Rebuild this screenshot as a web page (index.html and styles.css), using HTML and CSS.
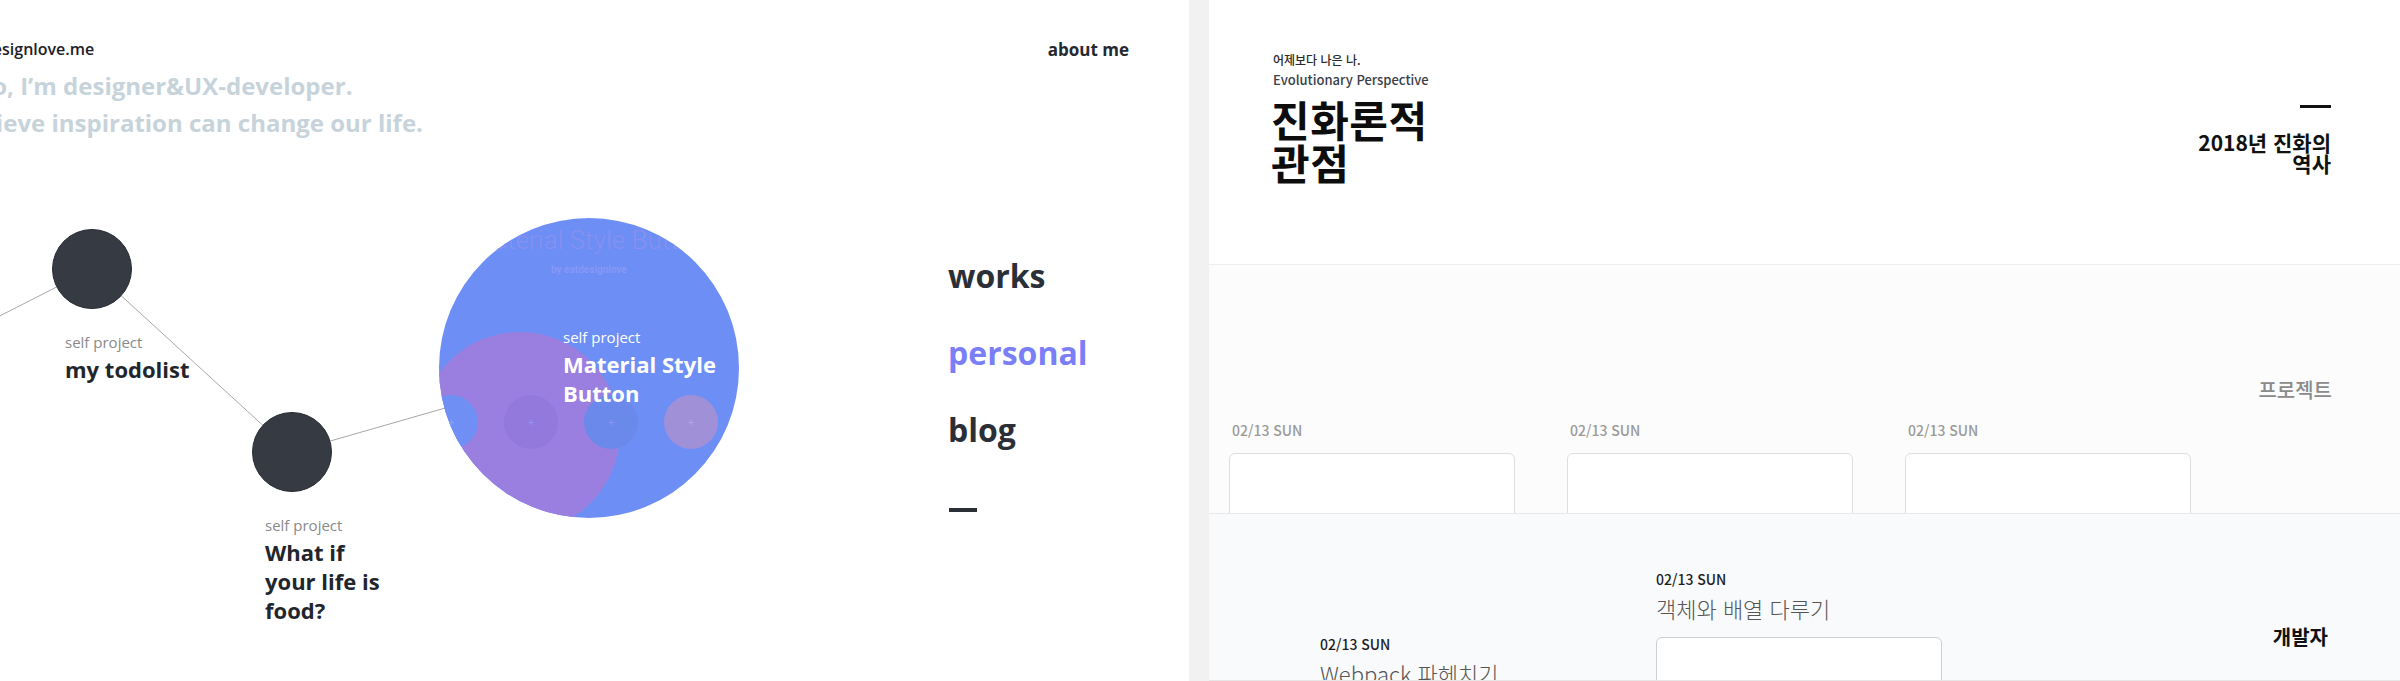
FILE: index.html
```html
<!DOCTYPE html>
<html lang="ko">
<head>
<meta charset="utf-8">
<title>eatdesignlove / 진화론적 관점</title>
<link rel="stylesheet" href="styles.css">
</head>
<body>
<section class="left">
  <header class="lhead">
    <div class="topbar">
      <div class="brand">eatdesignlove.me</div>
      <a class="about">about me</a>
    </div>
    <div class="hero">
      <p>Hello, I’m designer&amp;UX-developer.</p>
      <p>I believe inspiration can change our life.</p>
    </div>
  </header>
  <div class="stage">
    <div class="diagram">
      <svg class="links" width="948" height="541" viewBox="0 0 948 541">
        <line x1="-20" y1="186" x2="92" y2="129"/>
        <line x1="92" y1="129" x2="292" y2="312"/>
        <line x1="292" y1="312" x2="588" y2="227"/>
      </svg>
      <div class="node n1"></div>
      <div class="label l1">
        <div class="kind">self project</div>
        <div class="name">my todolist</div>
      </div>
      <div class="node n2"></div>
      <div class="label l2">
        <div class="kind">self project</div>
        <div class="name">What if your life is food?</div>
      </div>
      <div class="msb">
        <div class="msb-title">Material Style Button</div>
        <div class="msb-by">by eatdesignlove</div>
        <div class="msb-blob"></div>
        <div class="msb-dots">
          <span class="d d1">+</span><span class="d d2">+</span><span class="d d3">+</span><span class="d d4">+</span>
        </div>
        <div class="label lw">
          <div class="kind">self project</div>
          <div class="name">Material Style Button</div>
        </div>
      </div>
    </div>
    <nav class="nav">
      <a class="nav-item">works</a>
      <a class="nav-item active">personal</a>
      <a class="nav-item">blog</a>
      <span class="nav-dash"></span>
    </nav>
  </div>
</section>
<div class="strip"></div>
<section class="right">
  <header class="rhead">
    <div class="rhead-left">
      <p class="tag">어제보다 나은 나.</p>
      <p class="sub">Evolutionary Perspective</p>
      <h1 class="big">진화론적<br>관점</h1>
    </div>
    <div class="rhead-right">
      <span class="rdash"></span>
      <p class="history">2018년 진화의 역사</p>
    </div>
  </header>
  <div class="projects">
    <h2 class="sec-title">프로젝트</h2>
    <div class="cards">
      <div class="card-col"><div class="date">02/13 SUN</div><div class="card"></div></div>
      <div class="card-col"><div class="date">02/13 SUN</div><div class="card"></div></div>
      <div class="card-col"><div class="date">02/13 SUN</div><div class="card"></div></div>
    </div>
  </div>
  <div class="dev">
    <div class="post p1">
      <div class="date dark">02/13 SUN</div>
      <div class="post-title">Webpack 파헤치기</div>
    </div>
    <div class="post p2">
      <div class="date dark">02/13 SUN</div>
      <div class="post-title">객체와 배열 다루기</div>
      <div class="card card2"></div>
    </div>
    <h2 class="dev-title">개발자</h2>
  </div>
</section>
</body>
</html>
```
FILE: styles.css
```css
* { box-sizing: border-box; }
html, body { margin: 0; padding: 0; }
body {
  width: 2400px;
  height: 681px;
  overflow: hidden;
  display: flex;
  background: #fff;
  font-family: "Open Sans", "Noto Sans", sans-serif;
}
p, h1, h2 { margin: 0; }
a { text-decoration: none; }

/* ---------- left panel ---------- */
.left {
  width: 1189px;
  height: 681px;
  flex: none;
  overflow: hidden;
  display: flex;
  flex-direction: column;
  background: #fff;
}
.lhead { height: 140px; flex: none; }
.topbar {
  display: flex;
  justify-content: space-between;
  align-items: center;
  height: 24px;
  margin-top: 37px;
  padding-right: 60px;
}
.brand {
  margin-left: -42px;
  font-size: 16px;
  font-weight: 600;
  color: #1d2026;
  white-space: nowrap;
}
.about {
  font-size: 17px;
  font-weight: 700;
  color: #252930;
}
.hero {
  margin-left: -55px;
  margin-top: 6px;
  font-size: 24px;
  font-weight: 700;
  line-height: 37px;
  color: #c7d3db;
  white-space: nowrap;
}

.stage { flex: 1; display: flex; }
.diagram { position: relative; width: 948px; flex: none; }
.links { position: absolute; left: 0; top: 0; overflow: visible; }
.links line { stroke: #a7a7a7; stroke-width: 1; }

.node {
  position: absolute;
  width: 80px;
  height: 80px;
  border-radius: 50%;
  background: #363b43;
  border: 1px solid #262a30;
}
.n1 { left: 52px; top: 89px; }
.n2 { left: 252px; top: 272px; }

.label { position: absolute; }
.l1 { left: 65px; top: 191px; }
.l2 { left: 265px; top: 374px; width: 122px; }
.kind {
  font-size: 15px;
  line-height: 22px;
  color: #8a8a8a;
}
.name {
  margin-top: 2px;
  font-size: 22px;
  line-height: 29px;
  font-weight: 700;
  color: #22262c;
}

.msb {
  position: absolute;
  left: 439px;
  top: 78px;
  width: 300px;
  height: 300px;
  border-radius: 50%;
  overflow: hidden;
  background: #6d8ef5;
  text-align: center;
}
.msb-title {
  margin-top: 5px;
  font-family: Roboto, sans-serif;
  font-weight: 300;
  font-size: 26px;
  line-height: 34px;
  color: #8890f1;
  white-space: nowrap;
}
.msb-by {
  margin-top: 6px;
  font-family: Roboto, sans-serif;
  font-size: 10px;
  line-height: 14px;
  font-weight: 700;
  color: #8798f5;
}
.msb-blob {
  position: absolute;
  left: -19px;
  top: 114px;
  width: 200px;
  height: 200px;
  border-radius: 50%;
  background: #9b7fe0;
}
.msb-dots {
  position: absolute;
  left: -15px;
  top: 177px;
  display: flex;
  gap: 26px;
}
.d {
  width: 54px;
  height: 54px;
  border-radius: 50%;
  display: flex;
  align-items: center;
  justify-content: center;
  font-family: "DejaVu Sans", sans-serif;
  font-size: 9px;
  font-weight: 700;
}
.d1 { background: #6f8ff4; color: #86a0f6; }
.d2 { background: #9479dc; color: #8c93f0; }
.d3 { background: #6b89ea; color: #8c92ef; }
.d4 { background: #a090d8; color: #afa2e4; }
.lw { left: 124px; top: 108px; text-align: left; width: 170px; }
.lw .kind { color: #fff; }
.lw .name { color: #fff; }

.nav {
  display: flex;
  flex-direction: column;
  align-items: flex-start;
  padding-top: 97px;
}
.nav-item {
  font-size: 32px;
  line-height: 77px;
  font-weight: 700;
  color: #2b2f37;
}
.nav-item.active { color: #7a7ff7; }
.nav-dash {
  margin-top: 40px;
  margin-left: 1px;
  width: 28px;
  height: 4px;
  background: #2b2f37;
}

.strip { width: 20px; flex: none; background: #f1f1f1; }

/* ---------- right panel ---------- */
.right {
  flex: 1;
  height: 681px;
  display: flex;
  flex-direction: column;
  font-family: "Noto Sans CJK KR", "Noto Sans", sans-serif;
  overflow: hidden;
}
.rhead {
  height: 265px;
  flex: none;
  display: flex;
  justify-content: space-between;
  padding: 0 69px 0 64px;
  border-bottom: 1px solid #eeeeee;
  background: #fff;
}
.rhead-left { padding-top: 50px; }
.tag {
  font-size: 12px;
  line-height: 20px;
  font-weight: 500;
  color: #2a2a2a;
}
.sub {
  font-size: 13px;
  line-height: 20px;
  font-weight: 500;
  color: #3a3e48;
}
.big {
  margin-top: 7px;
  font-size: 42px;
  line-height: 43px;
  letter-spacing: 0.5px;
  font-weight: 700;
  color: #0d0d0d;
  margin-left: -2px;
}
.rhead-right {
  padding-top: 105px;
  display: flex;
  flex-direction: column;
  align-items: flex-end;
}
.rdash { width: 31px; height: 3px; background: #111; }
.history {
  margin-top: 24px;
  width: 150px;
  text-align: right;
  font-size: 21px;
  line-height: 21px;
  font-weight: 700;
  color: #111;
}

.projects {
  height: 248px;
  flex: none;
  overflow: hidden;
  display: flex;
  flex-direction: column;
  padding: 113px 68px 0 20px;
  background: #fcfcfd;
}
.sec-title {
  align-self: flex-end;
  font-size: 20px;
  line-height: 24px;
  font-weight: 500;
  color: #8b8b8b;
}
.cards { display: flex; gap: 52px; margin-top: 18px; }
.card-col { width: 286px; }
.date {
  font-size: 14px;
  line-height: 20px;
  font-weight: 500;
  color: #9a9a9a;
  padding-left: 3px;
}
.date.dark { color: #1e1e1e; padding-left: 0; }
.card {
  margin-top: 13px;
  height: 200px;
  border: 1px solid #dedede;
  border-radius: 6px;
  background: #fff;
}

.dev {
  flex: 1;
  display: flex;
  align-items: flex-start;
  padding-left: 111px;
  background: #f9fafc;
  border-top: 1px solid #e8e8e8;
  border-bottom: 1px solid #e6e6e6;
  overflow: hidden;
}
.post { flex: none; }
.p1 { width: 336px; padding-top: 120px; }
.p2 { width: 286px; padding-top: 55px; }
.post-title {
  margin-top: 4px;
  font-size: 22px;
  line-height: 30px;
  font-weight: 300;
  color: #555;
  white-space: nowrap;
}
.card2 { margin-top: 14px; border-color: #cfcfcf; }
.dev-title {
  margin-left: auto;
  margin-right: 72px;
  padding-top: 111px;
  font-size: 20px;
  line-height: 24px;
  font-weight: 700;
  color: #111;
}
```
